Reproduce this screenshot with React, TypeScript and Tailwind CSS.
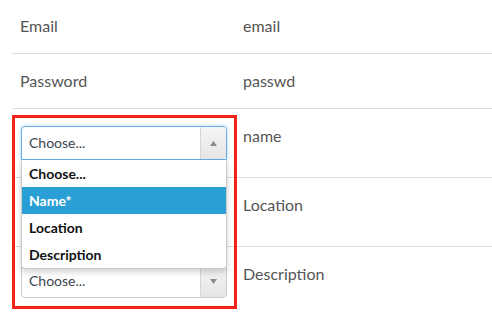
import React from "react";

function SelectBox({ open }: { open?: boolean }) {
  return (
    <div className="relative w-[206px]">
      <div
        className={
          "flex h-[34px] w-full items-stretch rounded-[4px] border bg-white " +
          (open
            ? "border-[#66afe9] shadow-[0_0_4px_rgba(102,175,233,0.5)] rounded-b-none"
            : "border-[#cccccc]")
        }
      >
        <div className="flex flex-1 items-center pl-[7px] text-[14px] text-[#3c4650]">Choose...</div>
        <div className="flex w-[26px] items-center justify-center border-l border-[#d6d6d6] bg-gradient-to-b from-[#f4f4f4] to-[#e6e6e6] rounded-r-[3px]">
          <svg width="7" height="5" viewBox="0 0 7 5">
            {open ? (
              <path d="M0 5 L3.5 0 L7 5 Z" fill="#8a8a8a" />
            ) : (
              <path d="M0 0 L3.5 5 L7 0 Z" fill="#8a8a8a" />
            )}
          </svg>
        </div>
      </div>
      {open && (
        <div className="absolute left-0 top-[34px] z-10 w-full rounded-b-[4px] border border-t-0 border-[#cccccc] bg-white shadow-[0_3px_6px_rgba(0,0,0,0.18)]">
          {["Choose...", "Name*", "Location", "Description"].map((t) => (
            <div
              key={t}
              className={
                "flex h-[27px] items-center pl-[7px] text-[14px] font-bold " +
                (t === "Name*" ? "bg-[#2a9fd6] text-white" : "text-[#111111]")
              }
            >
              {t}
            </div>
          ))}
        </div>
      )}
    </div>
  );
}

export default function App() {
  const rows: { left: React.ReactNode; right: string; sel?: boolean }[] = [
    { left: "Email", right: "email" },
    { left: "Password", right: "passwd" },
    { left: <SelectBox open />, right: "name", sel: true },
    { left: <SelectBox />, right: "Location", sel: true },
    { left: <SelectBox />, right: "Description", sel: true },
  ];
  return (
    <div
      className="relative h-[315px] w-[492px] overflow-hidden bg-white text-[16px] leading-[20px] text-[#555555]"
      style={{ fontFamily: "Lato, 'Open Sans', sans-serif" }}
    >
      <div className="ml-[12px] -mt-[1px] flex flex-col">
        {rows.map((r, i) => (
          <div
            key={i}
            className={
              "flex items-start " + (i < rows.length - 1 ? "border-b border-[#dddddd]" : "")
            }
          >
            <div className={"w-[223px] px-[8px] py-[17px] " + (r.sel ? "pl-[9px]" : "")}>{r.left}</div>
            <div className="flex-1 px-[8px] py-[17px]">{r.right}</div>
          </div>
        ))}
      </div>
      <div className="pointer-events-none absolute left-[12px] top-[115px] z-20 h-[194px] w-[225px] border-[3px] border-[#f2221a]" />
    </div>
  );
}
